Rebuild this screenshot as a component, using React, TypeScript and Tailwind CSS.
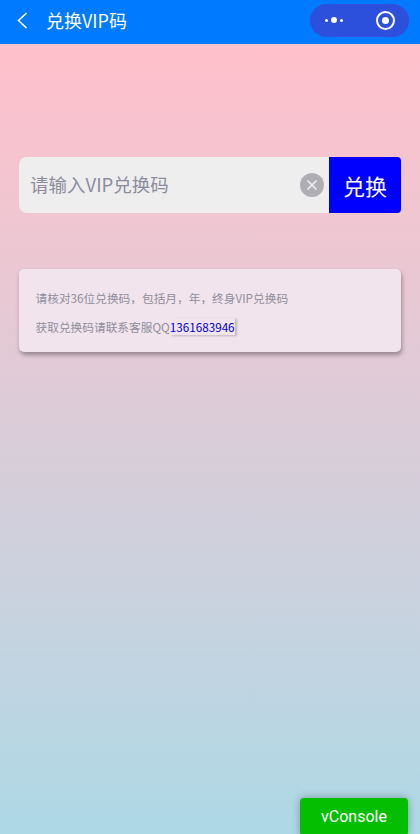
import React from "react";

const cjk = "font-['Noto_Sans_CJK_SC','Noto_Sans',sans-serif]";

const App = () => {
  return (
    <div className={`relative flex h-[834px] w-full flex-col overflow-hidden ${cjk}`}>
      {/* title bar */}
      <div className="flex h-[44px] shrink-0 items-center bg-[#007aff] pb-[4px] pl-[17px] pr-[11px]">
        <svg width="11" height="17" viewBox="0 0 11 17" fill="none" stroke="#fff" strokeWidth="1.6">
          <path d="M9.5 1 1.5 8.5l8 7.5" />
        </svg>
        <span className="ml-[18px] text-[18px] text-white">兑换VIP码</span>
        <div className="ml-auto flex h-[33px] w-[99px] items-center rounded-full bg-[#2c50dc] pl-[15px]">
          <span className="h-[3px] w-[3px] rounded-full bg-white" />
          <span className="ml-[3px] h-[6px] w-[6px] rounded-full bg-white" />
          <span className="ml-[3px] h-[3px] w-[3px] rounded-full bg-white" />
          <span className="ml-[33px] flex h-[19px] w-[19px] items-center justify-center rounded-full border-2 border-white">
            <span className="h-[7px] w-[7px] rounded-full bg-white" />
          </span>
        </div>
      </div>

      {/* page body */}
      <div className="flex-1 bg-gradient-to-b from-[#ffc0cb] to-[#add8e6] px-[19px] pt-[113px]">
        <div className="flex h-[56px]">
          <div className="flex flex-1 items-center rounded-l-[8px] bg-[#eeeeee] pl-[11px] pr-[5px]">
            <span className="flex-1 text-[18.5px] text-[#8c8c9e]">请输入VIP兑换码</span>
            <span className="flex h-[24px] w-[24px] items-center justify-center rounded-full bg-[#aeaeb4]">
              <svg width="12" height="12" viewBox="0 0 12 12" stroke="#eeeeee" strokeWidth="1.6">
                <path d="m1.5 1.5 9 9M10.5 1.5l-9 9" />
              </svg>
            </span>
          </div>
          <div className="flex w-[72px] items-center justify-center rounded-r-[4px] bg-[#0000ff] text-[22px] text-white">兑换</div>
        </div>

        <div className="mt-[56px] h-[83px] rounded-[5px] bg-[#f2e4ec] pl-[17px] pt-[20px] text-[11.7px] text-[#8e8e9c] shadow-[1px_3px_4px_rgba(90,80,90,0.55)]">
          <p className="-ml-[0.5px] leading-[18px]">请核对36位兑换码，包括月，年，终身VIP兑换码</p>
          <p className="-ml-[0.5px] mt-[11px] leading-[18px]">
            获取兑换码请联系客服QQ
            <span className="text-[#0000d0] shadow-[2px_1px_2px_rgba(120,110,130,0.4)]">1361683946</span>
          </p>
        </div>
      </div>

      {/* floating debug button */}
      <div className="absolute bottom-[-2px] right-[12px] flex h-[38px] w-[108px] items-center justify-center rounded-[4px] bg-[#04be02] font-['Roboto',sans-serif] text-[16px] text-white shadow-[0_0_8px_rgba(0,0,0,0.3)]">
        vConsole
      </div>
    </div>
  );
};

export default App;
